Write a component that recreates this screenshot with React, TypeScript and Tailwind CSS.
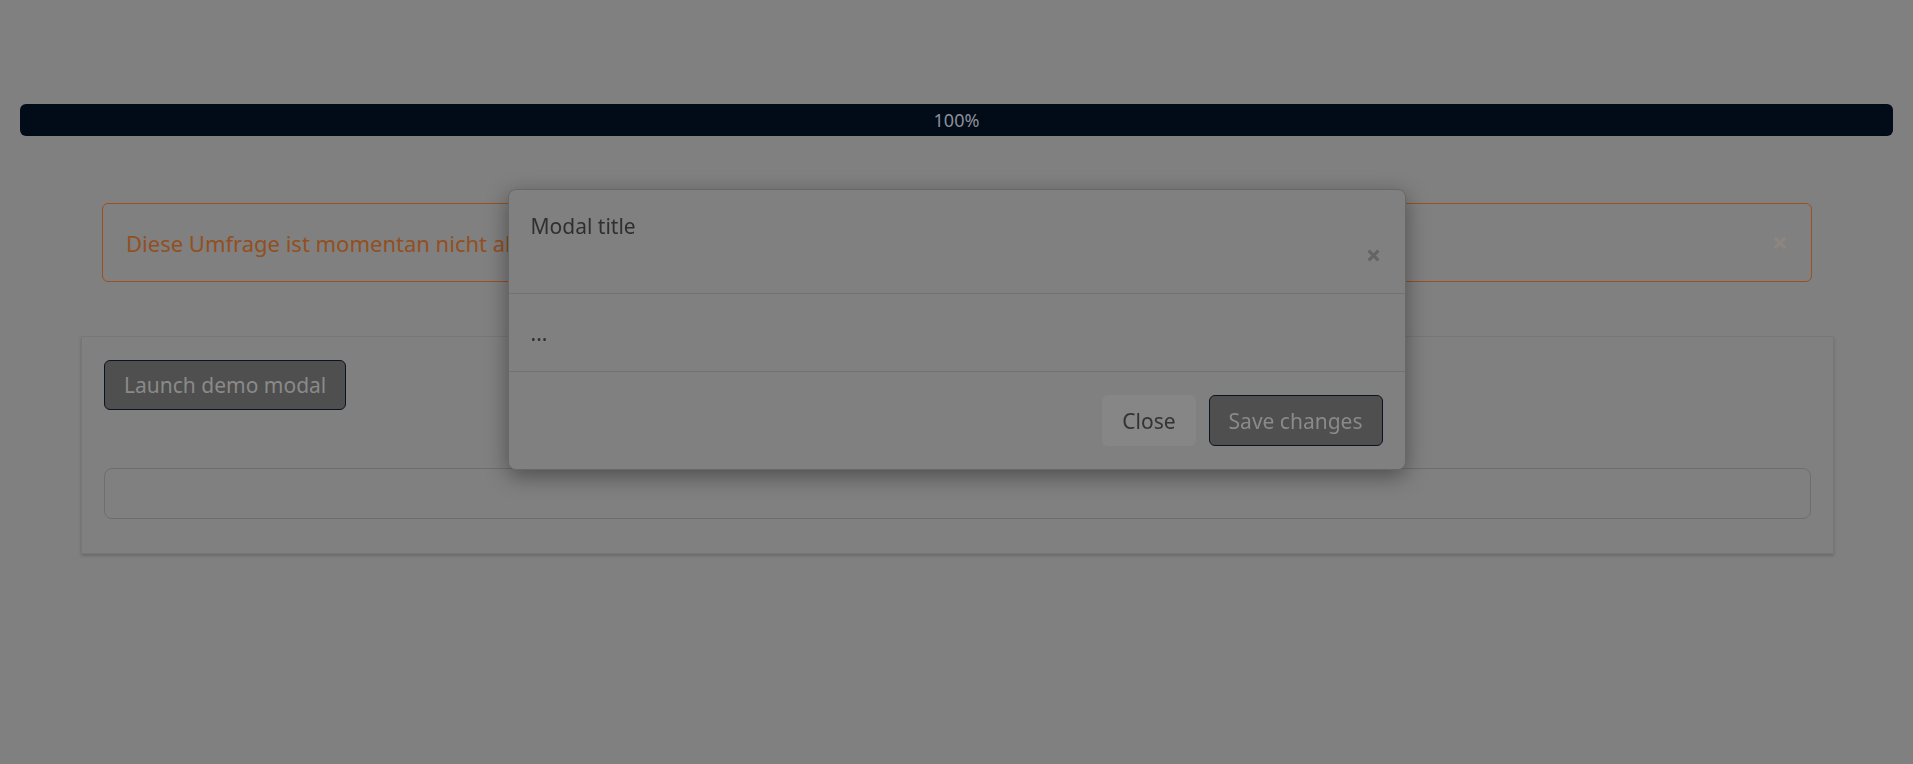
const XIcon = ({ size, width = 2.4, className }: { size: number; width?: number; className?: string }) => (
    <svg width={size} height={size} viewBox="0 0 12 12" className={className}>
        <path d="M1.5 1.5 L10.5 10.5 M10.5 1.5 L1.5 10.5" stroke="currentColor" strokeWidth={width} strokeLinecap="butt" />
    </svg>
);

const App = () => {
    return (
        <div className="min-h-screen bg-[#808080] pt-[104px] pb-[200px] font-['Noto_Sans',sans-serif]">
            {/* progress */}
            <div className="mx-[20px] h-[32px] rounded-[6px] bg-[#020b18] flex items-center justify-center">
                <span className="text-[18px] leading-none text-[#8a9099]">100%</span>
            </div>

            {/* alert */}
            <div className="ml-[102px] w-[1710px] mt-[67px] h-[79px] rounded-[6px] border border-[#99511f] flex items-center justify-between pl-[23px] pr-[24px]">
                <span className="text-[22px] leading-[30px] text-[#934f20]">Diese Umfrage ist momentan nicht aktiv.</span>
                <XIcon size={14} width={2.8} className="text-[#8c8580]" />
            </div>

            {/* card */}
            <div className="ml-[81px] w-[1753px] mt-[54px] border border-[#777777] shadow-[0_2px_3px_rgba(0,0,0,0.18)] pl-[22px] pr-[22px] pt-[23px] pb-[34px]">
                <button className="h-[50px] px-[19px] rounded-[6px] border border-[#0b1222] bg-[#4f4f4f] text-[21px] leading-[30px] text-[#8a8a8a]">
                    Launch demo modal
                </button>
                <div className="mt-[58px] h-[51px] rounded-[8px] border border-[#6e6e6e]"></div>
            </div>

            {/* modal */}
            <div className="fixed top-[189px] left-1/2 -translate-x-1/2 w-[898px] rounded-[8px] border border-[#686868] bg-[#808080] shadow-[0_6px_22px_rgba(0,0,0,0.4)]">
                <div className="h-[104px] border-b border-[#727272] flex justify-between pl-[22px] pr-[25px] pt-[21px] pb-[31px]">
                    <h5 className="text-[21px] leading-[30px] text-[#2f2f2f]">Modal title</h5>
                    <div className="self-end text-[#646464]">
                        <XIcon size={13} width={2.8} />
                    </div>
                </div>
                <div className="h-[78px] border-b border-[#727272] flex items-center pl-[22px]">
                    <span className="text-[21px] leading-[30px] text-[#2f2f2f]">...</span>
                </div>
                <div className="h-[97px] flex items-center justify-end gap-[13px] pr-[22px]">
                    <button className="h-[51px] px-[19px] rounded-[6px] border border-transparent bg-[#868686] text-[21px] leading-[30px] text-[#333333]">
                        Close
                    </button>
                    <button className="h-[51px] px-[19px] rounded-[6px] border border-[#0b1222] bg-[#4f4f4f] text-[21px] leading-[30px] text-[#8a8a8a]">
                        Save changes
                    </button>
                </div>
            </div>
        </div>
    );
};

export default App;
